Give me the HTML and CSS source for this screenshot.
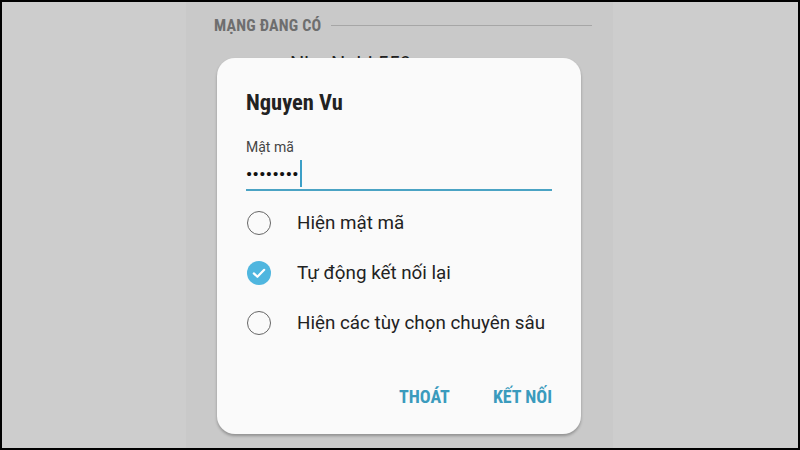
FILE: index.html
```html
<!DOCTYPE html>
<html lang="vi">
<head>
    <meta charset="UTF-8">
    <meta name="viewport" content="width=device-width, initial-scale=1.0">
    <title>Kết nối Wi-Fi</title>
    <link rel="stylesheet" href="styles.css">
</head>
<body>
    <div class="frame">
        <div class="phone">
            <div class="section-head">
                <span>MẠNG ĐANG CÓ</span>
                <i class="rule"></i>
            </div>
            <div class="network">Nha Nghi 559</div>
        </div>

        <!-- Hộp thoại nhập mật mã -->
        <div class="dialog">
            <h1 class="dialog-title">Nguyen Vu</h1>
            <label class="field-label" for="matma">Mật mã</label>
            <div class="field" id="matma">
                <span class="dots">••••••••</span>
                <span class="cursor"></span>
            </div>

            <ul class="options">
                <li class="option">
                    <span class="radio"></span>
                    <span>Hiện mật mã</span>
                </li>
                <li class="option">
                    <span class="radio checked">
                        <svg width="24" height="24" viewBox="0 0 24 24">
                            <path d="M6.8 12.4 L10.4 15.8 L17.2 8.8" fill="none" stroke="#fff" stroke-width="2.2" stroke-linecap="round" stroke-linejoin="round"/>
                        </svg>
                    </span>
                    <span>Tự động kết nối lại</span>
                </li>
                <li class="option">
                    <span class="radio"></span>
                    <span>Hiện các tùy chọn chuyên sâu</span>
                </li>
            </ul>

            <div class="actions">
                <button type="button" class="btn">THOÁT</button>
                <button type="button" class="btn">KẾT NỐI</button>
            </div>
        </div>
    </div>
</body>
</html>
```

FILE: styles.css
```css
html, body {
    margin: 0;
    padding: 0;
}
body {
    background: #000;
    font-family: Roboto, "Noto Sans", sans-serif;
    width: 800px;
    height: 450px;
    padding: 2px;
    box-sizing: border-box;
    overflow: hidden;
}
.frame {
    position: relative;
    height: 446px;
    background: #cdcdcd;
    display: flex;
    justify-content: center;
}
.phone {
    width: 427px;
    margin-left: -1px;
    background: #c9c9c9;
}
.section-head {
    display: flex;
    align-items: center;
    gap: 10px;
    padding: 14px 21px 0 28px;
    height: 18px;
}
.section-head span {
    font-family: "Roboto Condensed", "Liberation Sans Narrow", Roboto, sans-serif;
    font-size: 16px;
    font-weight: 700;
    letter-spacing: 0.2px;
    color: #6e6e6e;
    white-space: nowrap;
}
.rule {
    flex: 1;
    height: 1px;
    background: #a6a6a6;
}
.network {
    margin: 18px 0 0 104px;
    font-size: 20px;
    color: #222;
}
.dialog {
    position: absolute;
    left: 215px;
    top: 56px;
    width: 364px;
    height: 376px;
    box-sizing: border-box;
    padding: 32px 29px 0 29px;
    background: #fafafa;
    border-radius: 18px;
    box-shadow: 0 2px 3px rgba(0, 0, 0, 0.28);
}
.dialog-title {
    margin: 0;
    font-family: "Roboto Condensed", "Liberation Sans Narrow", Roboto, sans-serif;
    font-size: 22.5px;
    line-height: 24px;
    font-weight: 700;
    color: #222;
}
.field-label {
    display: block;
    margin-top: 24px;
    font-size: 14px;
    line-height: 18px;
    color: #444;
}
.field {
    display: flex;
    align-items: center;
    margin-top: 2px;
    height: 31px;
    border-bottom: 2px solid #4aa3c4;
}
.dots {
    font-size: 17px;
    font-weight: 700;
    letter-spacing: 0.5px;
    color: #111;
}
.cursor {
    width: 2px;
    height: 27px;
    margin-left: 1px;
    background: #3c9fc7;
}
.options {
    list-style: none;
    margin: 7px 0 0 0;
    padding: 0;
}
.option {
    display: flex;
    align-items: center;
    gap: 26px;
    height: 50px;
    padding-left: 1px;
    font-size: 18.8px;
    color: #222;
}
.radio {
    width: 24px;
    height: 24px;
    box-sizing: border-box;
    border: 1.5px solid #666;
    border-radius: 50%;
    flex-shrink: 0;
}
.radio.checked {
    border: none;
    background: #4fb6df;
}
.radio svg {
    display: block;
}
.actions {
    display: flex;
    justify-content: flex-end;
    gap: 43px;
    margin-top: 38px;
}
.btn {
    background: none;
    border: none;
    padding: 0;
    font-family: "Roboto Condensed", "Liberation Sans Narrow", Roboto, sans-serif;
    font-size: 18px;
    font-weight: 700;
    color: #3a9bbd;
    cursor: pointer;
}
```
